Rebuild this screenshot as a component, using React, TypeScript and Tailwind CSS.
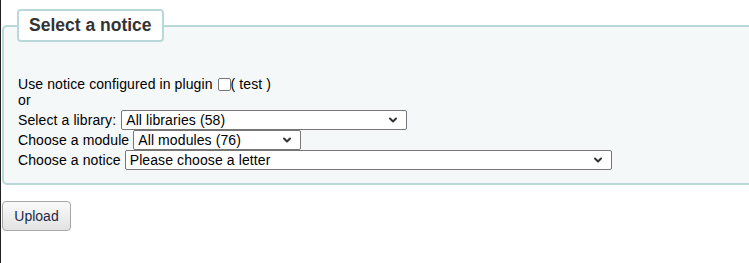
import { ChevronDown } from "lucide-react";

function FakeSelect({ width, label }: { width: string; label: string }) {
  return (
    <div
      className={`${width} h-[20px] flex items-center justify-between bg-white border border-[#767676] rounded-[2px] pl-[4px] pr-[7px] text-[14px] text-black leading-none`}
    >
      <span>{label}</span>
      <ChevronDown size={12} strokeWidth={4} className="text-[#333]" />
    </div>
  );
}

export default function App() {
  return (
    <div
      className="h-[263px] w-[749px] overflow-hidden border-l border-[#222] pl-[1px] bg-white text-black"
      style={{ fontFamily: '"Liberation Sans", Arial, sans-serif' }}
    >
      <fieldset className="w-[770px] mt-[9px] border-2 border-[#b9d8d9] rounded-[5px] bg-[#f4f8f9] pl-[14px] pr-0 pb-[13px]">
        <legend className="ml-[-1px] px-[10px] py-[4px] bg-white border-2 border-[#b9d8d9] rounded-[4px] text-[17.5px] font-bold text-[#333] leading-[21px]">
          Select a notice
        </legend>

        <div className="pt-[34px] text-[14px] leading-[16px] tracking-[0.1px]">
          <div className="flex items-center">
            <span>Use notice configured in plugin</span>
            <span className="inline-block ml-[5px] w-[13px] h-[13px] border border-[#767676] rounded-[2px] bg-white" />
            <span>( test )</span>
          </div>
          <div>or</div>

          <div className="mt-[2px] flex items-center h-[20px] gap-[5px]">
            <span>Select a library:</span>
            <FakeSelect width="w-[286px]" label="All libraries (58)" />
          </div>
          <div className="flex items-center h-[20px] gap-[4px]">
            <span>Choose a module</span>
            <FakeSelect width="w-[168px]" label="All modules (76)" />
          </div>
          <div className="flex items-center h-[20px] gap-[4px]">
            <span>Choose a notice</span>
            <FakeSelect width="w-[487px]" label="Please choose a letter" />
          </div>
        </div>
      </fieldset>

      <button className="mt-[16px] w-[69px] h-[30px] border border-[#a6a6a6] rounded-[4px] bg-gradient-to-b from-[#fafafa] to-[#e3e3e3] text-[14px] text-[#1f2a44]">
        Upload
      </button>
    </div>
  );
}
